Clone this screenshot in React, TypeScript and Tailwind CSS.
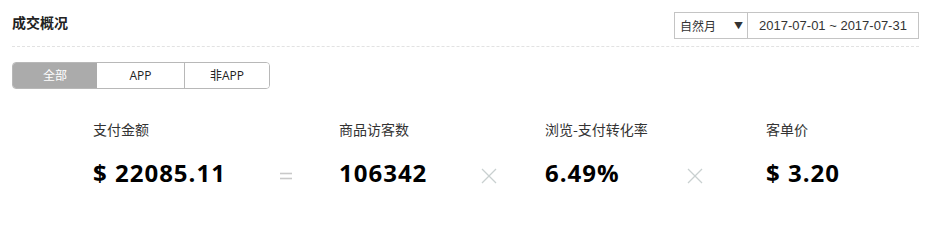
import React from "react"

const cjk = { fontFamily: '"Noto Sans CJK SC", "Noto Sans", sans-serif' }
const num = { fontFamily: '"Open Sans", "Noto Sans CJK SC", sans-serif' }

function Equals() {
  return (
    <svg width="14" height="8" viewBox="0 0 14 8">
      <line x1="1" y1="1.5" x2="13" y2="1.5" stroke="#c9c9c9" strokeWidth="1.6" />
      <line x1="1" y1="6.5" x2="13" y2="6.5" stroke="#c9c9c9" strokeWidth="1.6" />
    </svg>
  )
}

function Times() {
  return (
    <svg width="16" height="16" viewBox="0 0 16 16">
      <line x1="1" y1="1" x2="15" y2="15" stroke="#c9d0d0" strokeWidth="1.3" />
      <line x1="15" y1="1" x2="1" y2="15" stroke="#c9d0d0" strokeWidth="1.3" />
    </svg>
  )
}

function Metric({ label, value, width, pad }: { label: string; value: string; width: string; pad: string }) {
  return (
    <div className={`${width} ${pad} shrink-0`}>
      <div className="text-[14px] leading-5 text-[#333]" style={cjk}>{label}</div>
      <div className="mt-[18px] text-[24px] font-bold leading-8 tracking-[1px] text-black" style={num}>{value}</div>
    </div>
  )
}

function Op({ children }: { children: React.ReactNode }) {
  return (
    <div className="flex w-[40px] shrink-0 justify-center pt-[49px]">
      <div className="flex h-[16px] items-center">{children}</div>
    </div>
  )
}

export default function App() {
  const tabs = ["全部", "APP", "非APP"]
  return (
    <div className="h-[219px] w-[935px] bg-white" style={cjk}>
      <div className="ml-[12px] mr-[16px] flex items-start justify-between border-b border-dashed border-[#e2e2e2] pt-[12px] pb-[7px]">
        <h2 className="text-[14px] font-bold leading-5 text-[#222]">成交概况</h2>
        <div className="flex h-[27px] border border-[#c4c4c4] text-[#333]">
          <div className="flex w-[73px] items-center justify-between border-r border-[#c4c4c4] pl-[5px] pr-[4px] text-[12px]">
            <span>自然月</span>
            <span className="text-[9px] text-[#333]">▼</span>
          </div>
          <div
            className="flex w-[170px] items-center justify-center text-[13px]"
            style={{ fontFamily: '"Liberation Sans", Arial, sans-serif' }}
          >
            2017-07-01 ~ 2017-07-31
          </div>
        </div>
      </div>

      <div className="ml-[12px] mt-[15px] flex h-[27px] w-[258px] overflow-hidden rounded-[4px] border border-[#b8b8b8] text-[12px]">
        {tabs.map((t, i) => (
          <div
            key={t}
            className={
              i === 0
                ? "flex w-[84px] items-center justify-center bg-[#ababab] text-white"
                : i === 1
                ? "flex w-[88px] items-center justify-center border-r border-[#b8b8b8] bg-white text-[#222]"
                : "flex flex-1 items-center justify-center bg-white text-[#222]"
            }
            style={{ fontFamily: '"Open Sans", "Noto Sans CJK SC", sans-serif' }}
          >
            {t}
          </div>
        ))}
      </div>

      <div className="mt-[30px] flex pl-[93px]">
        <Metric label="支付金额" value="$ 22085.11" width="w-[173px]" pad="" />
        <Op><Equals /></Op>
        <Metric label="商品访客数" value="106342" width="w-[163px]" pad="pl-[33px]" />
        <Op><Times /></Op>
        <Metric label="浏览-支付转化率" value="6.49%" width="w-[166px]" pad="pl-[36px]" />
        <Op><Times /></Op>
        <Metric label="客单价" value="$ 3.20" width="w-[180px]" pad="pl-[51px]" />
      </div>
    </div>
  )
}
